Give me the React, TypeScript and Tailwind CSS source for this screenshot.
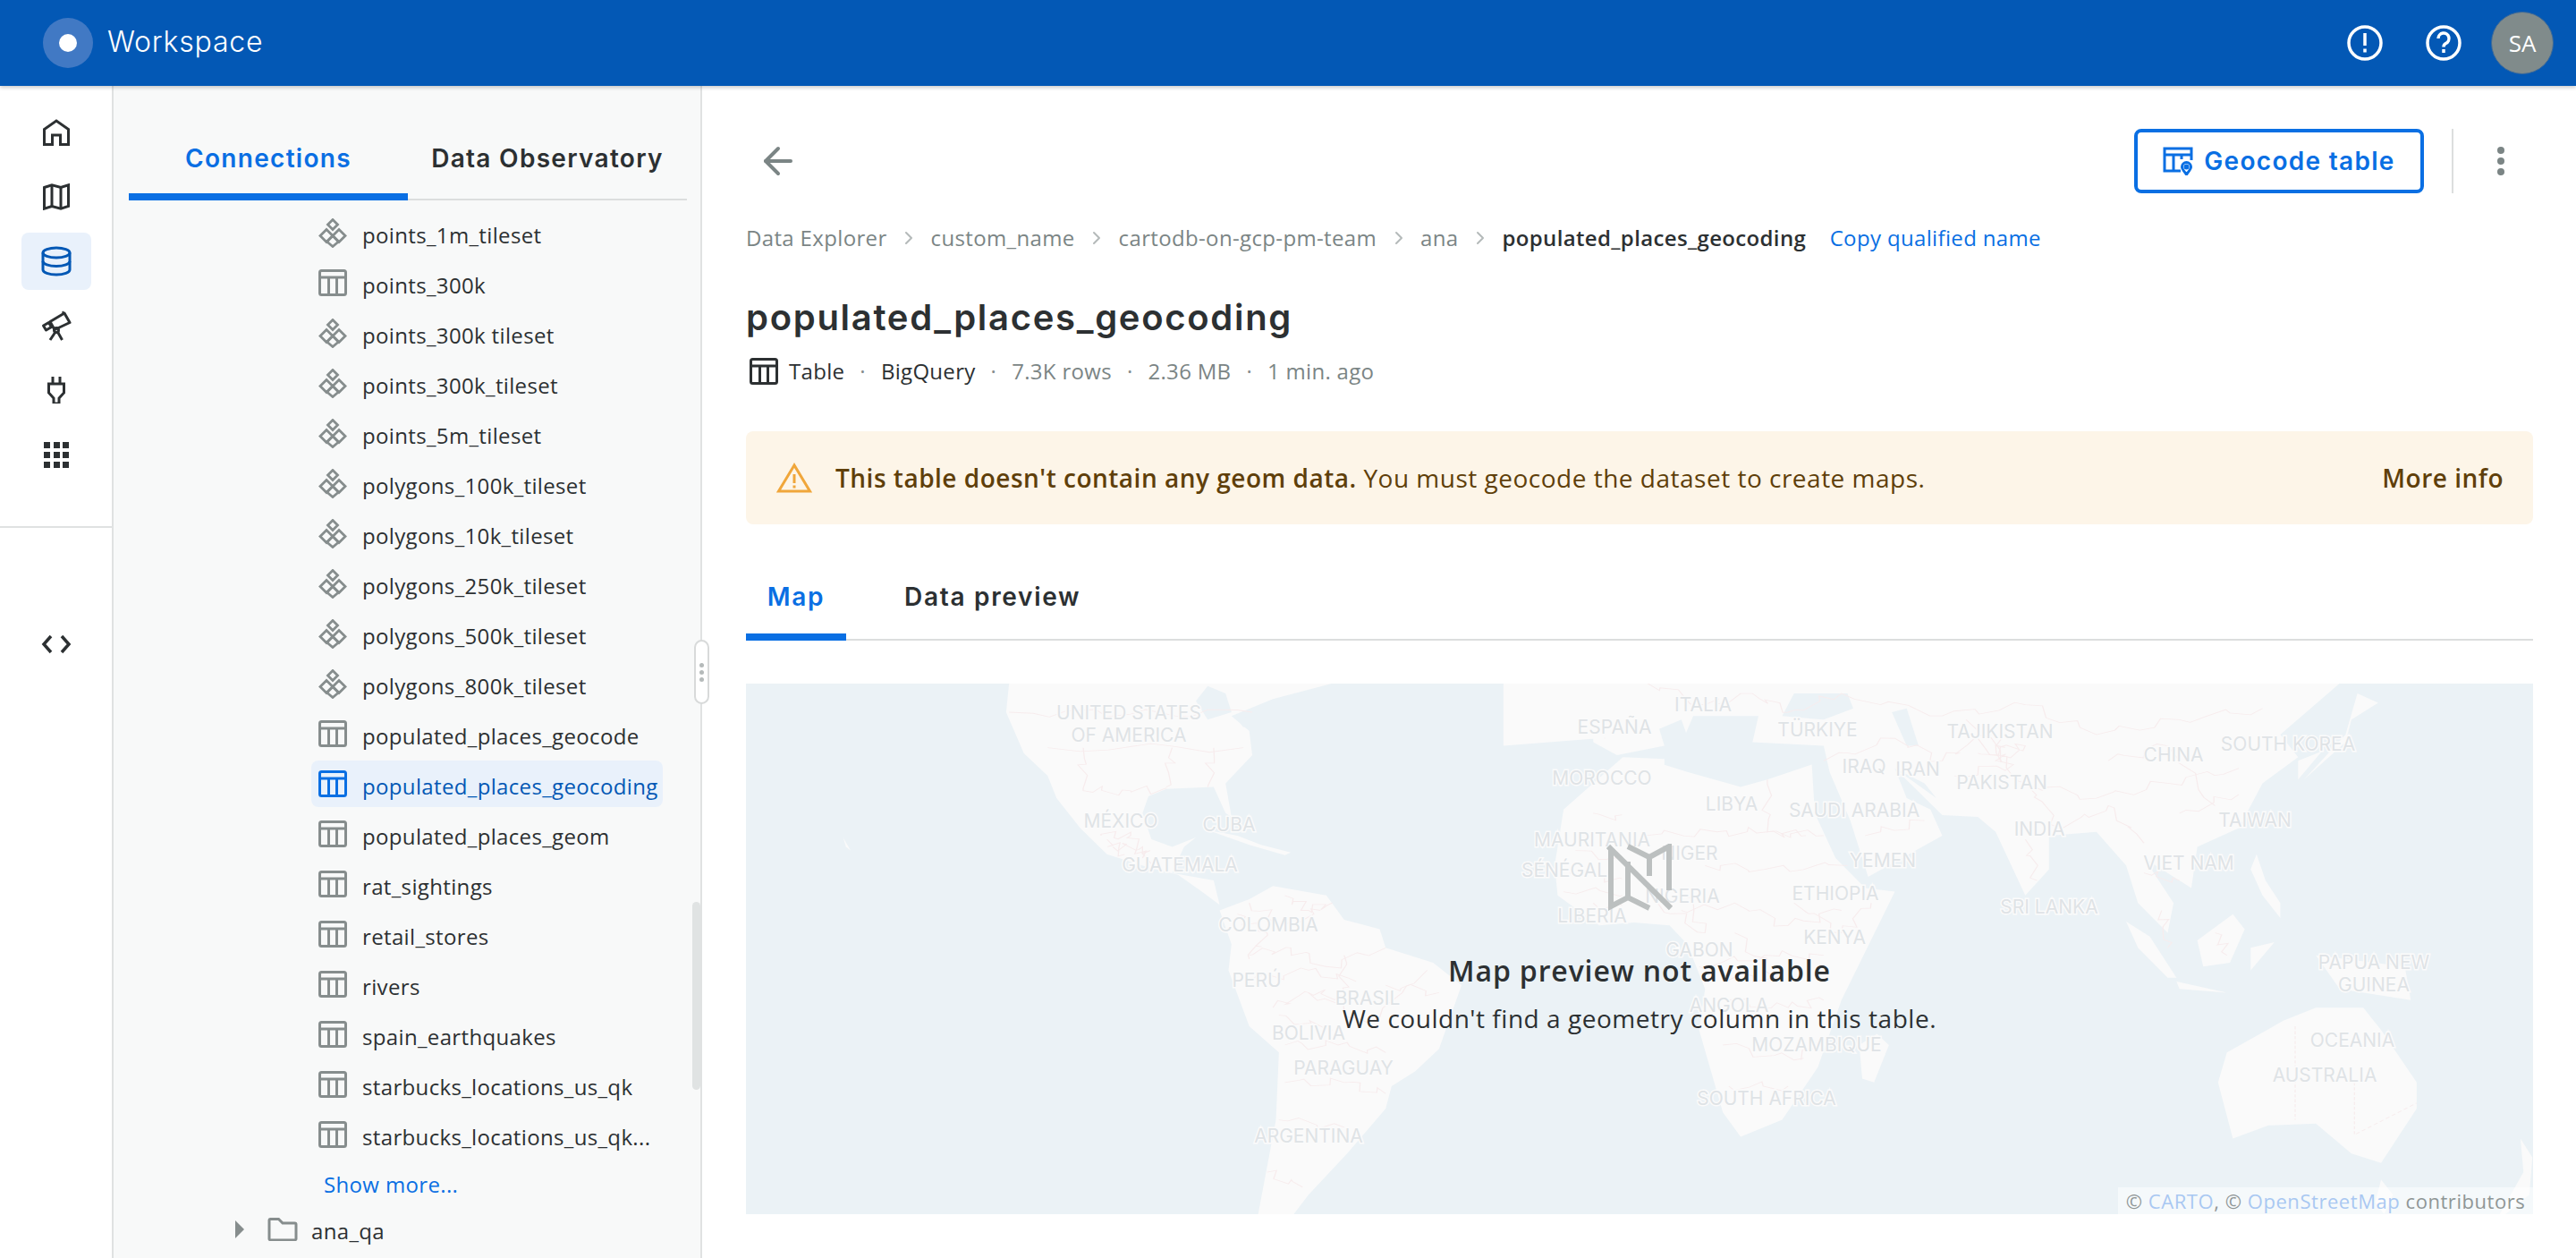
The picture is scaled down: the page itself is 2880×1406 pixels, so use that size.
import React from 'react';
import { ArrowLeft, ChevronRight } from 'lucide-react';

const sans = 'font-["Open_Sans",sans-serif]';
const head = 'font-["Inter",sans-serif]';

function TilesetIcon({ className = '' }: { className?: string }) {
  return (
    <svg viewBox="0 0 32 33" className={`w-8 h-[33px] shrink-0 ${className}`} fill="none" stroke="currentColor" strokeWidth="2.800">
      <path d="M16 1.500l5.500 5.500-5.500 5.500-5.500-5.500z" />
      <path d="M9 12.500l7 7-7 7-7-7z" />
      <path d="M23 12.500l7 7-7 7-7-7z" />
      <path d="M16 19.500l6.500 6.500-6.500 5.500-6.500-5.500z" />
    </svg>
  );
}

function TableIcon({ className = '' }: { className?: string }) {
  return (
    <svg viewBox="0 0 32 30" className={`w-8 h-[30px] shrink-0 ${className}`} fill="none" stroke="currentColor" strokeWidth="3">
      <rect x="1.500" y="1.500" width="29" height="27" rx="2" />
      <path d="M1.500 9h29M11.500 9v19M20.500 9v19" />
    </svg>
  );
}

function FolderIcon() {
  return (
    <svg viewBox="0 0 34 26" className="w-[34px] h-[26px] shrink-0 text-[#868d8d]" fill="none" stroke="currentColor" strokeWidth="3">
      <path d="M2 3a1.500 1.500 0 0 1 1.500-1.500h9L17 6h13.500A1.500 1.500 0 0 1 32 7.500v16a1.500 1.500 0 0 1-1.500 1.500h-27A1.500 1.500 0 0 1 2 23.500z" />
    </svg>
  );
}

function HomeIcon() {
  return (
    <svg viewBox="0 0 30 30" className="w-[30px] h-[30px]" fill="none" stroke="currentColor" strokeWidth="3">
      <path d="M1.500 28.500V11.500L15 2l13.500 9.500v17H19.500V18h-9v10.500z" />
    </svg>
  );
}

function MapIcon() {
  return (
    <svg viewBox="0 0 30 30" className="w-[30px] h-[30px]" fill="none" stroke="currentColor" strokeWidth="3">
      <path d="M1.500 4.500L10 1.800l10 2.700 8.500-2.700v23.700L20 28.200l-10-2.700-8.500 2.700z" />
      <path d="M10 2v23.500M20 4.500V28" />
    </svg>
  );
}

function DatabaseIcon() {
  return (
    <svg viewBox="0 0 34 34" className="w-[34px] h-[34px] text-[#0358b5]" fill="none" stroke="currentColor" strokeWidth="3">
      <ellipse cx="17" cy="7.500" rx="15" ry="5.500" />
      <path d="M2 7.500v19c0 3 6.700 5.500 15 5.500s15-2.500 15-5.500v-19" />
      <path d="M2 17c0 3 6.700 5.500 15 5.500S32 20 32 17" />
    </svg>
  );
}

function TelescopeIcon() {
  return (
    <svg viewBox="0 0 34 34" className="w-[34px] h-[34px]" fill="none" stroke="currentColor" strokeWidth="3" strokeLinejoin="round">
      <path d="M10 12.500L26 3l6 10.500-17 8z" />
      <path d="M2.500 17l6-3.500 3 5-6 3.500z" />
      <path d="M24 3l1.500-1.500" />
      <circle cx="17" cy="22" r="2.500" />
      <path d="M16 24l-6 9M18.500 24l5 9" />
    </svg>
  );
}

function PlugIcon() {
  return (
    <svg viewBox="0 0 22 30" className="w-[22px] h-[30px]" fill="none" stroke="currentColor" strokeWidth="3">
      <path d="M7 0v8M15 0v8" />
      <path d="M2.500 8h17v10L14 24v6H8v-6l-5.500-6z" />
    </svg>
  );
}

function CodeIcon() {
  return (
    <svg viewBox="0 0 34 22" className="w-[34px] h-[22px]" fill="none" stroke="currentColor" strokeWidth="3.500">
      <path d="M11 2L3 11l8 9M23 2l8 9-8 9" />
    </svg>
  );
}

function AppsIcon() {
  const cells = [0, 1, 2, 3, 4, 5, 6, 7, 8];
  return (
    <div className="grid grid-cols-3 gap-[4px] w-7">
      {cells.map((c) => (
        <span key={c} className="w-[7px] h-[7px] bg-[#2c3032]" />
      ))}
    </div>
  );
}

function RailButton({ active, children }: { active?: boolean; children: React.ReactNode }) {
  return (
    <div className={`w-[78px] h-16 rounded-lg flex items-center justify-center ${active ? 'bg-[#e9f1fb]' : ''}`}>
      {children}
    </div>
  );
}

const tree: [string, 'tile' | 'table'][] = [
  ['points_1m_tileset', 'tile'],
  ['points_300k', 'table'],
  ['points_300k tileset', 'tile'],
  ['points_300k_tileset', 'tile'],
  ['points_5m_tileset', 'tile'],
  ['polygons_100k_tileset', 'tile'],
  ['polygons_10k_tileset', 'tile'],
  ['polygons_250k_tileset', 'tile'],
  ['polygons_500k_tileset', 'tile'],
  ['polygons_800k_tileset', 'tile'],
  ['populated_places_geocode', 'table'],
  ['populated_places_geocoding', 'table'],
  ['populated_places_geom', 'table'],
  ['rat_sightings', 'table'],
  ['retail_stores', 'table'],
  ['rivers', 'table'],
  ['spain_earthquakes', 'table'],
  ['starbucks_locations_us_qk', 'table'],
  ['starbucks_locations_us_qk...', 'table'],
];

function Sidebar() {
  return (
    <aside className="relative w-[658px] shrink-0 bg-[#f8f9f9] border-r-2 border-[#e0e2e2] pl-[17px] pr-[15px] pt-[40px]">
      <div className={`flex h-[88px] border-b-2 border-[#dcdede] font-semibold text-[28px] tracking-[1.3px] ${head}`}>
        <div className="w-[312px] h-[88px] border-b-8 border-[#0a6fe3] text-[#0a6fe3] flex items-center justify-center pt-[2px]">
          Connections
        </div>
        <div className="flex-1 text-[#2c3032] flex items-center justify-center pb-[4px]">
          Data Observatory
        </div>
      </div>
      <div className={`pl-[204px] pt-[10px] flex flex-col gap-1 text-[24px] tracking-[0.35px] text-[#2c3032] ${sans}`}>
        {tree.map(([name, kind]) => {
          const selected = name === 'populated_places_geocoding';
          return (
            <div key={name} className={`flex items-center h-[52px] w-[393px] rounded-lg pl-2 pr-[3px] gap-[17px] ${selected ? 'bg-[#e9f1fb] text-[#0358b5]' : ''}`}>
              {kind === 'tile' ? (
                <TilesetIcon className="text-[#868d8d]" />
              ) : (
                <TableIcon className={selected ? 'text-[#0a6fe3]' : 'text-[#868d8d]'} />
              )}
              <span className="truncate pt-[6px] leading-[32px]">{name}</span>
            </div>
          );
        })}
        <div className="h-[52px] pl-[14px] flex items-center text-[#0a6fe3]">Show more...</div>
      </div>
      <div className={`pl-[119px] pt-[4px] flex items-center text-[24px] tracking-[0.35px] text-[#2c3032] ${sans}`}>
        <span className="w-0 h-0 border-y-[10px] border-y-transparent border-l-[10px] border-l-[#868d8d]" />
        <span className="ml-[26px]"><FolderIcon /></span>
        <span className="ml-[15px] pt-1">ana_qa</span>
      </div>
      {/* scrollbar thumb and the resize handle sit on top of the panel edge */}
      <div className="absolute left-[647px] top-[912px] w-[9px] h-[210px] rounded-full bg-[#e0e3e3]" />
      <div className="absolute left-[649px] top-[619px] w-[17px] h-[72px] rounded-full bg-white border-2 border-[#d8dada] flex flex-col items-center justify-center gap-[3px] z-10">
        <span className="w-[5px] h-[5px] rounded-full bg-[#b5baba]" />
        <span className="w-[5px] h-[5px] rounded-full bg-[#b5baba]" />
        <span className="w-[5px] h-[5px] rounded-full bg-[#b5baba]" />
      </div>
    </aside>
  );
}

const land = {
  // west half, in the coordinates of the left crop
  west: [
    '495,33 490,110 520,220 560,280 575,340 615,420 660,490 730,525 780,545 820,590 850,625 840,560 770,540 790,470 810,445 770,470 735,450 720,380 730,335 760,315 840,310 860,380 870,390 860,300 905,225 900,160 870,120 940,75 1040,33',
    '850,640 900,610 940,575 1030,600 1060,665 1120,690 1130,740 1210,780 1258,840 1220,1010 1180,1070 1140,1110 1130,1170 1065,1290 1000,1400 975,1452 915,1452 945,1200 950,1020 900,950 865,800 870,730',
    '830,425 880,440 920,465 970,485 960,492 900,465',
    '1480,100 1480,190 1520,225 1600,200 1568,33 1500,33',
    '1530,230 1430,370 1415,520 1420,600 1490,680 1568,670 1600,660 1600,235',
    '215,445 228,480 220,470',
  ],
  // east half, in the coordinates of the right crop
  east: [
    '-240,33 -240,200 0,170 60,130 68,165 80,120 190,120 180,190 300,200 310,270 345,400 375,550 500,440 480,370 440,340 420,260 500,385 560,390 590,430 640,600 680,530 680,440 760,430 810,520 830,620 880,700 890,620 840,500 920,580 930,470 1000,420 1040,300 1100,230 1070,170 1170,33',
    '0,235 70,270 160,310 205,290 280,250 285,380 320,500 370,580 420,590 330,880 290,1060 230,1200 160,1245 130,1180 90,960 100,850 70,730 40,680 -40,670 -40,235',
    '810,670 850,710 895,820 880,820 830,740',
    '895,830 980,860 900,850',
    '930,720 990,650 1010,690 985,780 940,790',
    '1020,740 1060,725 1020,800',
    '1030,490 1045,560 1070,620 1070,660 1040,600 1020,530',
    '1130,760 1280,790 1290,880 1170,850',
    '1075,935 1130,900 1210,900 1240,960 1300,1100 1300,1170 1240,1315 1190,1290 1130,1210 1050,1215 990,1250 965,1100 980,1020',
    '1100,240 1140,215 1100,290',
    '1200,60 1235,85 1190,130 1180,190 1110,290 1180,170',
    '360,1000 390,970 410,1000 385,1100 365,1090',
    '1475,1250 1495,1300 1490,1400 1450,1452 1440,1452 1480,1340',
    '1240,1360 1260,1400 1245,1452 1230,1420',
  ],
  // seas and lakes cut back out of the land
  waterEast: [
    '230,120 250,60 340,60 350,100 300,130',
    '415,110 440,200 460,200 440,100',
    '420,260 490,340 470,300',
  ],
  waterWest: [
    '810,80 830,40 860,60 870,110 830,130',
    '880,130 920,110 930,125 890,150',
  ],
};

// thin pink admin boundaries
const borders = {
  west: [
    '495,110 700,115 905,110', '560,205 890,205', '620,205 620,320 700,320 760,315', '770,205 760,310', '840,205 830,310',
    '650,440 700,440 720,500', '670,470 720,470 735,520', '880,650 930,700 900,770', '960,600 1000,640 1040,620', '900,760 970,740 1030,790 1130,740',
    '940,900 1000,860 1100,940 1200,800', '960,1000 1050,1000 1130,1020', '960,1100 1060,1100 1130,1130', '950,1200 1060,1220', '930,1340 990,1380',
    '1060,760 1060,870 1000,860', '1480,380 1568,400', '1450,480 1568,520', '1430,590 1568,590', '1500,110 1500,180',
    '900,620 960,680 1020,640', '900,830 1000,800 1080,830', '950,920 1040,960', '1130,840 1220,860', '660,450 690,490', '1440,540 1540,560', '1480,620 1568,640',
  ],
  east: [
    '0,30 100,90 180,60 240,110 330,60 500,120 640,90 760,170 900,130 1040,100', '300,240 420,180 500,240 560,180 640,300 760,340 880,300 1000,260', '640,300 700,420 780,360 840,460',
    '600,180 590,240 640,200 560,220', '205,290 205,430 300,440', '0,440 120,430 205,430 270,440', '100,520 200,530 340,520', '60,640 150,620 240,680 330,640', '90,790 200,760 300,760',
    '130,880 240,900 300,880', '130,1000 250,1040 290,1000', '140,1110 240,1110', '640,450 660,560', '840,540 900,560', '370,440 470,400',
    '870,640 880,740', '960,700 980,760', '20,620 100,700 60,580', '150,700 220,820 130,820', '250,620 330,700 380,620', '540,130 620,250 520,280', '780,240 880,200 960,360', '900,380 1000,330',
  ],
  straight: ['1095,950 1095,1200', '1195,1100 1195,1240 1300,1155'],
};

// roughen a boundary so it reads as a coastline-scale line, not a ruler line
function jag(points: string) {
  const pts = points.split(' ').map((p) => p.split(',').map(Number));
  const out: string[] = [];
  pts.forEach((p, i) => {
    const next = pts[i + 1];
    if (!next) {
      out.push(p.join(','));
      return;
    }
    for (let s = 0; s < 6; s++) {
      const t = s / 6;
      const x = p[0] + (next[0] - p[0]) * t + (s ? Math.sin(p[0] + s * 2.3) * 9 : 0);
      const y = p[1] + (next[1] - p[1]) * t + (s ? Math.cos(p[1] + s * 1.7) * 12 : 0);
      out.push(`${x.toFixed(0)},${y.toFixed(0)}`);
    }
  });
  return out.join(' ');
}

const labels: [string, number, number][] = [
  ['UNITED STATES', 1262, 797], ['OF AMERICA', 1262, 822], ['ESPAÑA', 1805, 813], ['MOROCCO', 1791, 870], ['MAURITANIA', 1780, 939],
  ['SÉNÉGAL', 1749, 973], ['LIBERIA', 1780, 1024], ['NIGER', 1889, 954], ['NIGERIA', 1881, 1002], ['LIBYA', 1936, 899], ['ITALIA', 1904, 788],
  ['TÜRKIYE', 2032, 816], ['TAJIKISTAN', 2236, 818], ['SOUTH KOREA', 2558, 832], ['CHINA', 2430, 844], ['IRAQ', 2084, 857], ['IRAN', 2144, 860],
  ['PAKISTAN', 2238, 875], ['SAUDI ARABIA', 2073, 906], ['INDIA', 2280, 927], ['TAIWAN', 2521, 917], ['YEMEN', 2105, 962], ['VIET NAM', 2447, 965],
  ['ETHIOPIA', 2052, 999], ['SRI LANKA', 2291, 1014], ['KENYA', 2051, 1048], ['GABON', 1900, 1062], ['ANGOLA', 1933, 1124], ['MOZAMBIQUE', 2031, 1168],
  ['SOUTH AFRICA', 1975, 1228], ['PAPUA NEW', 2654, 1076], ['GUINEA', 2654, 1101], ['OCEANIA', 2630, 1163], ['AUSTRALIA', 2599, 1202], ['MÉXICO', 1253, 918],
  ['CUBA', 1374, 922], ['GUATEMALA', 1319, 967], ['COLOMBIA', 1418, 1034], ['PERÚ', 1405, 1096], ['BRASIL', 1529, 1116], ['BOLIVIA', 1463, 1155],
  ['PARAGUAY', 1502, 1194], ['ARGENTINA', 1463, 1270],
];

function WorldMap() {
  return (
    <svg viewBox="834 764 1998 593" className="absolute inset-0 w-full h-full" preserveAspectRatio="none">
      <g transform="translate(800 750) scale(0.663 0.418)">
        {land.west.map((p) => <polygon key={p} points={p} fill="#fafafa" />)}
        {land.waterWest.map((p) => <polygon key={p} points={p} fill="#ebf2f6" />)}
        {borders.west.map((p) => <polyline key={p} points={jag(p)} fill="none" stroke="#f7eced" strokeWidth="2" />)}
      </g>
      <g transform="translate(1840 750) scale(0.663 0.418)">
        {land.east.map((p) => <polygon key={p} points={p} fill="#fafafa" />)}
        {land.waterEast.map((p) => <polygon key={p} points={p} fill="#ebf2f6" />)}
        {borders.east.map((p) => <polyline key={p} points={jag(p)} fill="none" stroke="#f7eced" strokeWidth="2" />)}
        {borders.straight.map((p) => <polyline key={p} points={p} fill="none" stroke="#f7eced" strokeWidth="2" strokeDasharray="8 5" />)}
      </g>
      {labels.map(([t, x, y]) => (
        <text key={t} x={x} y={y + 7} textAnchor="middle" fontFamily="Inter, sans-serif" fontSize="21" fill="#dfe3e6" stroke="#fbfbfb" strokeWidth="3" paintOrder="stroke">{t}</text>
      ))}
    </svg>
  );
}

function NoMapIcon() {
  return (
    <svg viewBox="0 0 75 75" className="w-[75px] h-[75px] text-[#bcc0c0]" fill="none" stroke="currentColor" strokeWidth="6">
      <path d="M5 6v64l19-10 24 12" />
      <path d="M24 20v40M24 3l24 12 22-12v49M48 15v21" />
      <path d="M2 3l70 69" />
    </svg>
  );
}

function GeocodeIcon() {
  return (
    <svg viewBox="0 0 34 32" className="w-[34px] h-8" fill="none" stroke="currentColor" strokeWidth="3">
      <path d="M20 27H2V2h30v13" />
      <path d="M2 9h30M12 9v18M21 9v5" />
      <path d="M26.500 31c-3-4-5-6-5-8.500a5 5 0 0 1 10 0c0 2.500-2 4.500-5 8.500z" fill="white" />
      <circle cx="26.500" cy="22.500" r="1.500" />
    </svg>
  );
}

function Crumb({ children }: { children: React.ReactNode }) {
  return (
    <>
      <span>{children}</span>
      <ChevronRight className="w-6 h-6 text-[#b5baba]" strokeWidth={2} />
    </>
  );
}

function Dot() {
  return <span className="text-[#868d8d]">·</span>;
}

export default function App() {
  return (
    <div className={`h-[1406px] w-[2880px] overflow-hidden flex flex-col bg-white ${sans}`}>
      <header className="h-24 shrink-0 bg-[#0358b5] shadow-[0_2px_4px_rgba(0,0,0,0.2)] z-20 flex items-center pl-12 pr-[25px]">
        <div className="w-14 h-14 rounded-full bg-[#4179c4] flex items-center justify-center">
          <span className="w-5 h-5 rounded-full bg-white" />
        </div>
        <span className={`ml-4 pb-[2px] text-[32px] tracking-[0.8px] font-light text-white ${head}`}>Workspace</span>
        <div className="ml-auto flex items-center">
          <svg viewBox="0 0 40 40" className="w-10 h-10 text-white" fill="none" stroke="currentColor" strokeWidth="3.500">
            <circle cx="20" cy="20" r="18" />
            <path d="M20 9v14M20 26.500v4" />
          </svg>
          <svg viewBox="0 0 40 40" className="ml-12 w-10 h-10 text-white" fill="none" stroke="currentColor" strokeWidth="3.500">
            <circle cx="20" cy="20" r="18" />
            <path d="M14 15a6 6 0 1 1 8.500 5.500c-1.800 1-2.500 2-2.500 4M20 27v4" />
          </svg>
          <div className="ml-[33px] w-[70px] h-[70px] rounded-full bg-[#808b8b] border border-[#3f6a97] flex items-center justify-center text-white text-[26px]">SA</div>
        </div>
      </header>

      <div className="flex flex-1 min-h-0">
        <nav className="w-[127px] shrink-0 bg-white border-r-2 border-[#e0e2e2] text-[#2c3032]">
          <div className="pt-5 pl-6 flex flex-col gap-2 h-[494px] border-b-2 border-[#e0e2e2]">
            <RailButton><HomeIcon /></RailButton>
            <RailButton><MapIcon /></RailButton>
            <RailButton active><DatabaseIcon /></RailButton>
            <RailButton><TelescopeIcon /></RailButton>
            <RailButton><PlugIcon /></RailButton>
            <RailButton><AppsIcon /></RailButton>
          </div>
          <div className="pl-6 pt-[98px]">
            <RailButton><CodeIcon /></RailButton>
          </div>
        </nav>

        <Sidebar />

        <main className="flex-1 min-w-0 pl-[49px] pr-[48px] text-[#2c3032]">
          <div className="h-[120px] pt-[48px] flex items-start">
            <ArrowLeft className="ml-[12px] mt-[12px] w-12 h-12 text-[#7b8585]" strokeWidth={2} />
            <div className="ml-auto flex items-center">
              <button className={`w-[324px] h-[72px] border-4 border-[#0a6fe3] rounded-lg flex items-center justify-center gap-[12px] text-[#0a6fe3] text-[28px] font-semibold tracking-[1.3px] ${head}`}>
                <GeocodeIcon />
                Geocode table
              </button>
              <div className="ml-[31px] w-[2px] h-[72px] bg-[#dcdede]" />
              <div className="ml-[49px] mr-[32px] flex flex-col gap-[4px]">
                <span className="w-2 h-2 rounded-full bg-[#7b8585]" />
                <span className="w-2 h-2 rounded-full bg-[#7b8585]" />
                <span className="w-2 h-2 rounded-full bg-[#7b8585]" />
              </div>
            </div>
          </div>

          <div className="mt-[32px] flex items-center gap-[12.500px] text-[24px] tracking-[0.35px] text-[#7b8585] h-9">
            <Crumb>Data Explorer</Crumb>
            <Crumb>custom_name</Crumb>
            <Crumb>cartodb-on-gcp-pm-team</Crumb>
            <Crumb>ana</Crumb>
            <span className="text-[#2c3032] font-semibold">populated_places_geocoding</span>
            <span className="ml-[14px] text-[#0a6fe3]">Copy qualified name</span>
          </div>

          <h1 className={`mt-[43px] h-[56px] leading-[56px] text-[40px] tracking-[1.7px] font-semibold ${head}`}>populated_places_geocoding</h1>

          <div className="mt-[14px] h-9 flex items-center gap-[17px] text-[24px] tracking-[0.3px] text-[#7b8585]">
            <TableIcon className="ml-1 -mr-[5px] text-[#2c3032]" />
            <span className="text-[#2c3032]">Table</span>
            <Dot />
            <span className="text-[#2c3032]">BigQuery</span>
            <Dot />
            <span>7.3K rows</span>
            <Dot />
            <span>2.36 MB</span>
            <Dot />
            <span>1 min. ago</span>
          </div>

          <div className="mt-[49px] h-[104px] rounded-lg bg-[#fdf5e8] flex items-center pl-[34px] pr-[33px] text-[28px] tracking-[0.5px] text-[#5f3f0a]">
            <svg viewBox="0 0 40 34" className="w-10 h-[34px] shrink-0 text-[#f0a63a]" fill="none" stroke="currentColor" strokeWidth="3">
              <path d="M20 3L2.500 32h35z" />
              <path d="M20 13v10M20 25.500v3" />
            </svg>
            <span className="ml-[26px]"><span className="font-semibold">This table doesn't contain any geom data.</span> You must geocode the dataset to create maps.</span>
            <span className="ml-auto font-semibold">More info</span>
          </div>

          <div className={`mt-[34px] h-[96px] flex border-b-2 border-[#dcdede] text-[28px] font-semibold tracking-[1.7px] ${head}`}>
            <div className="w-[112px] h-[96px] border-b-8 border-[#0a6fe3] text-[#0a6fe3] flex items-center justify-center pt-[6px]">Map</div>
            <div className="ml-[65px] flex items-center">Data preview</div>
          </div>

          <div className="mt-[48px] relative h-[593px] bg-[#ebf2f6] overflow-hidden">
            <WorldMap />
            <div className="absolute inset-0 flex flex-col items-center pt-[179px]">
              <NoMapIcon />
              <div className="mt-[45px] text-[32px] font-semibold leading-[44px] tracking-[0.87px]">Map preview not available</div>
              <div className="mt-[9px] text-[28px] leading-[44px] tracking-[0.53px]">We couldn't find a geometry column in this table.</div>
            </div>
            <div className="absolute right-0 bottom-0 h-[30px] w-[464px] bg-white/50 flex items-center justify-center text-[22px] tracking-[0.55px] text-[#8f9696] whitespace-nowrap">
              <span>© <span className="text-[#a9c8f2]">CARTO</span>, © <span className="text-[#a9c8f2]">OpenStreetMap</span> contributors</span>
            </div>
          </div>
        </main>
      </div>
    </div>
  );
}
